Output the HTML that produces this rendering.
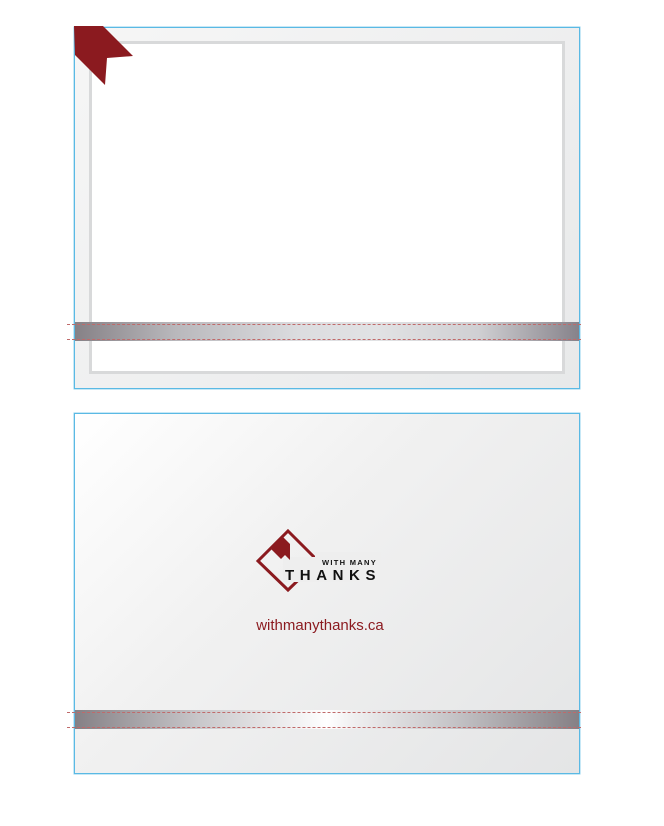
<!DOCTYPE html>
<html><head><style>
body{margin:0;width:664px;height:826px;background:#fff;position:relative;overflow:hidden;font-family:"Liberation Sans",sans-serif}
.card{position:absolute;left:74px;width:504px;border:1px solid #5ab9e4;box-shadow:0 0 0 0.5px #8fd0ee}
.c1{top:27px;height:360px;background:linear-gradient(135deg,#f6f6f6,#e8e9ea)}
.c2{top:413px;height:359px;background:linear-gradient(135deg,#ffffff 0%,#f1f1f1 40%,#e4e5e6 100%)}
.frame{position:absolute;left:14px;top:13px;width:470px;height:327px;background:#fff;border:3px solid #d8d9da}
.band{position:absolute;left:75px;width:504px;height:19px;background:linear-gradient(90deg,#858085 0%,#c9c8cb 25%,#f4f4f5 45%,#fff 50%,#f0f0f1 55%,#c5c4c7 75%,#858085 100%)}
.dash{position:absolute;left:67px;width:514px;border-top:1px dashed #c06a6a;z-index:2}
</style></head><body>
<div class="card c1"><div class="frame"></div></div>
<div class="band" style="top:322px;background:linear-gradient(90deg,#868186 0%,#b9b8bc 20%,#dcdde0 45%,#e1e2e4 60%,#d0d0d3 80%,#86828a 100%)"></div>
<div class="dash" style="top:324px"></div>
<div class="dash" style="top:339px"></div>
<svg style="position:absolute;left:0;top:0;z-index:3" width="664" height="120"><polygon points="74,26 103,26 133,56 107,58 105,85 75,55" fill="#8b1a1f"/></svg>
<div class="card c2"></div>
<div class="band" style="top:710px"></div>
<div class="dash" style="top:712px"></div>
<div class="dash" style="top:727px"></div>
<svg style="position:absolute;left:0;top:0" width="664" height="826">
<polygon points="288,531 318,561 288,590 258,561" fill="none" stroke="#8b1a1f" stroke-width="3"/>
<rect x="283" y="557" width="98" height="25" fill="#eeeeee"/>
<rect x="315" y="552" width="66" height="8" fill="#eeeeee"/>
<polygon points="270,548 282,536 290,544 290,560 285,555 281,559" fill="#8b1a1f"/>
<text x="322" y="565" font-size="7.5" font-weight="bold" letter-spacing="1.3" fill="#111">WITH MANY</text>
<text x="285" y="580" font-size="15" font-weight="bold" letter-spacing="5.6" fill="#111">THANKS</text>
</svg>
<div style="position:absolute;left:0;width:640px;top:617px;text-align:center;font-size:15px;color:#8b1a1f">withmanythanks.ca</div>
</body></html>
